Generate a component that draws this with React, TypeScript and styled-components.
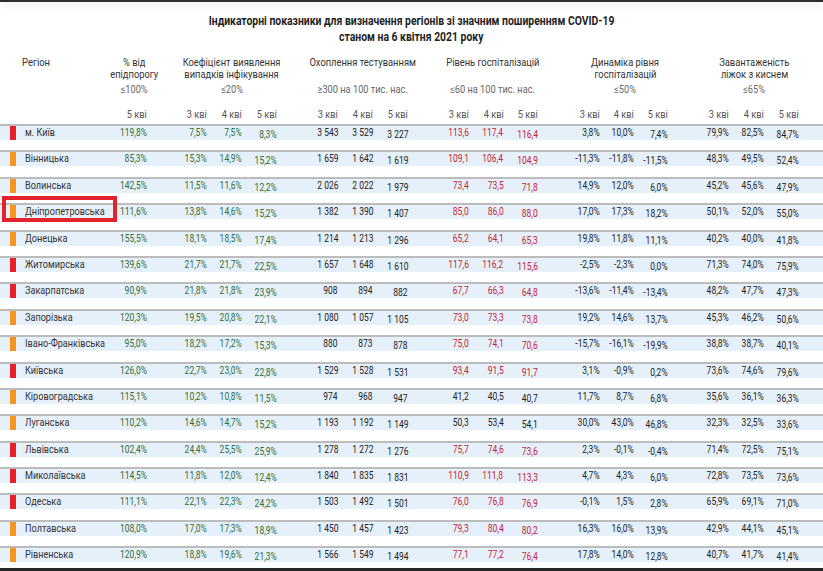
import React from 'react';
import styled, { createGlobalStyle } from 'styled-components';

type Level = 'red' | 'orange';
type Tone = 'green' | 'dark' | 'hosp';
type Origin = 'left' | 'center' | 'right';

interface RegionRow {
  name: string;
  level: Level;
  highlight?: boolean;
  values: string[][];
}

interface GroupDef {
  title: string[];
  limit: string;
  weeks: string[];
  gap: number;
  width: number;
  shift: number;
  tone: Tone;
}

const groups: GroupDef[] = [
  { title: ['% від', 'епідпорогу'], limit: '≤100%', weeks: ['5 кві'], gap: 0, width: 35, shift: 4.5, tone: 'green' },
  { title: ['Коефіцієнт виявлення', 'випадків інфікування'], limit: '≤20%', weeks: ['3 кві', '4 кві', '5 кві'], gap: 25, width: 105, shift: 7.5, tone: 'green' },
  { title: ['Охоплення тестуванням'], limit: '≥300 на 100 тис. нас.', weeks: ['3 кві', '4 кві', '5 кві'], gap: 26, width: 105, shift: 7.5, tone: 'dark' },
  { title: ['Рівень госпіталізацій'], limit: '≤60 на 100 тис. нас.', weeks: ['3 кві', '4 кві', '5 кві'], gap: 26, width: 104, shift: 7, tone: 'hosp' },
  { title: ['Динаміка рівня', 'госпіталізацій'], limit: '≤50%', weeks: ['3 кві', '4 кві', '5 кві'], gap: 27, width: 103, shift: 8.5, tone: 'dark' },
  { title: ['Завантаженість', 'ліжок з киснем'], limit: '≤65%', weeks: ['3 кві', '4 кві', '5 кві'], gap: 26, width: 105, shift: 8, tone: 'dark' },
];

const regions: RegionRow[] = [
  { name: 'м. Київ', level: 'red', values: [['119,8%'], ['7,5%', '7,5%', '8,3%'], ['3 543', '3 529', '3 227'], ['113,6', '117,4', '116,4'], ['3,8%', '10,0%', '7,4%'], ['79,9%', '82,5%', '84,7%']] },
  { name: 'Вінницька', level: 'orange', values: [['85,3%'], ['15,3%', '14,9%', '15,2%'], ['1 659', '1 642', '1 619'], ['109,1', '106,4', '104,9'], ['-11,3%', '-11,8%', '-11,5%'], ['48,3%', '49,5%', '52,4%']] },
  { name: 'Волинська', level: 'orange', values: [['142,5%'], ['11,5%', '11,6%', '12,2%'], ['2 026', '2 022', '1 979'], ['73,4', '73,5', '71,8'], ['14,9%', '12,0%', '6,0%'], ['45,2%', '45,6%', '47,9%']] },
  { name: 'Дніпропетровська', level: 'orange', highlight: true, values: [['111,6%'], ['13,8%', '14,6%', '15,2%'], ['1 382', '1 390', '1 407'], ['85,0', '86,0', '88,0'], ['17,0%', '17,3%', '18,2%'], ['50,1%', '52,0%', '55,0%']] },
  { name: 'Донецька', level: 'orange', values: [['155,5%'], ['18,1%', '18,5%', '17,4%'], ['1 214', '1 213', '1 296'], ['65,2', '64,1', '65,3'], ['19,8%', '11,8%', '11,1%'], ['40,2%', '40,0%', '41,8%']] },
  { name: 'Житомирська', level: 'red', values: [['139,6%'], ['21,7%', '21,7%', '22,5%'], ['1 657', '1 648', '1 610'], ['117,6', '116,2', '115,6'], ['-2,5%', '-2,3%', '0,0%'], ['71,3%', '74,0%', '75,9%']] },
  { name: 'Закарпатська', level: 'red', values: [['90,9%'], ['21,8%', '21,8%', '23,9%'], ['908', '894', '882'], ['67,7', '66,3', '64,8'], ['-13,6%', '-11,4%', '-13,4%'], ['48,2%', '47,7%', '47,3%']] },
  { name: 'Запорізька', level: 'orange', values: [['120,3%'], ['19,5%', '20,8%', '22,1%'], ['1 080', '1 057', '1 105'], ['73,0', '73,3', '73,8'], ['19,2%', '14,6%', '13,7%'], ['45,3%', '46,2%', '50,6%']] },
  { name: 'Івано-Франківська', level: 'orange', values: [['95,0%'], ['18,2%', '17,2%', '15,3%'], ['880', '873', '878'], ['75,0', '74,1', '70,6'], ['-15,7%', '-16,1%', '-19,9%'], ['38,8%', '38,7%', '40,1%']] },
  { name: 'Київська', level: 'red', values: [['126,0%'], ['22,7%', '23,0%', '22,8%'], ['1 529', '1 528', '1 531'], ['93,4', '91,5', '91,7'], ['3,1%', '-0,9%', '0,2%'], ['73,6%', '74,6%', '79,6%']] },
  { name: 'Кіровоградська', level: 'orange', values: [['115,1%'], ['10,2%', '10,8%', '11,5%'], ['974', '968', '947'], ['41,2', '40,5', '40,7'], ['11,7%', '8,7%', '6,8%'], ['35,6%', '36,1%', '36,3%']] },
  { name: 'Луганська', level: 'orange', values: [['110,2%'], ['14,6%', '14,7%', '15,2%'], ['1 193', '1 192', '1 149'], ['50,3', '53,4', '54,1'], ['30,0%', '43,0%', '46,8%'], ['32,3%', '32,5%', '33,6%']] },
  { name: 'Львівська', level: 'red', values: [['102,4%'], ['24,4%', '25,5%', '25,9%'], ['1 278', '1 272', '1 276'], ['75,7', '74,6', '73,6'], ['2,3%', '-0,1%', '-0,4%'], ['71,4%', '72,5%', '75,1%']] },
  { name: 'Миколаївська', level: 'red', values: [['114,5%'], ['11,8%', '12,0%', '12,4%'], ['1 840', '1 835', '1 831'], ['110,9', '111,8', '113,3'], ['4,7%', '4,3%', '6,0%'], ['72,8%', '73,5%', '73,6%']] },
  { name: 'Одеська', level: 'red', values: [['111,1%'], ['22,1%', '22,3%', '24,2%'], ['1 503', '1 492', '1 501'], ['76,0', '76,8', '76,9'], ['-0,1%', '1,5%', '2,8%'], ['65,9%', '69,1%', '71,0%']] },
  { name: 'Полтавська', level: 'orange', values: [['108,0%'], ['17,0%', '17,3%', '18,9%'], ['1 450', '1 457', '1 423'], ['79,3', '80,4', '80,2'], ['16,3%', '16,0%', '13,9%'], ['42,9%', '44,1%', '45,1%']] },
  { name: 'Рівненська', level: 'orange', values: [['120,9%'], ['18,8%', '19,6%', '21,3%'], ['1 566', '1 549', '1 494'], ['77,1', '77,2', '76,4'], ['17,8%', '14,0%', '12,8%'], ['40,7%', '41,7%', '41,4%']] },
];

const levelColor: Record<Level, string> = { red: '#e8202a', orange: '#f7941d' };

const GlobalStyle = createGlobalStyle`
  html, body {
    margin: 0;
    padding: 0;
    background: #fff;
  }
  body {
    font-family: "Roboto", "Liberation Sans", sans-serif;
    overflow: hidden;
  }
`;

// no condensed face is installed, so the narrow look is made by squeezing the glyphs
const Squeeze = styled.span<{ $scale: number; $origin: Origin }>`
  display: inline-block;
  white-space: nowrap;
  transform: scaleX(${({ $scale }) => $scale});
  transform-origin: ${({ $origin }) => $origin} center;
`;

const Page = styled.div`
  width: 823px;
  height: 571px;
  display: flex;
  flex-direction: column;
  overflow: hidden;
  background: #fff;
`;

const TopBar = styled.div`
  height: 2px;
  flex-shrink: 0;
  background: #2d2d2d;
  box-shadow: 0 2px 8px rgba(0, 0, 0, 0.2);
  position: relative;
  z-index: 2;
`;

const BottomBar = styled.div`
  height: 3px;
  flex-shrink: 0;
  background: #262626;
`;

const Sheet = styled.div`
  flex: 1;
  overflow: hidden;
  color: #222;
`;

const Title = styled.h1`
  margin: 11px 0 0;
  display: flex;
  flex-direction: column;
  align-items: center;
  font-size: 13px;
  line-height: 16px;
  font-weight: 700;
  color: #1f1f1f;
`;

const HeadRow = styled.div`
  display: flex;
  margin-top: 12px;
  font-size: 11px;
  line-height: 12px;
`;

const RegionHead = styled.div`
  width: 90px;
  padding-left: 22px;
  flex-shrink: 0;
  color: #333;
`;

const GroupBox = styled.div<{ $gap: number; $width: number }>`
  margin-left: ${({ $gap }) => $gap}px;
  width: ${({ $width }) => $width}px;
  flex-shrink: 0;
  display: flex;
  flex-direction: column;
`;

const GroupTitle = styled.div<{ $shift: number }>`
  height: 24px;
  padding-left: ${({ $shift }) => $shift * 2}px;
  display: flex;
  flex-direction: column;
  align-items: center;
  color: #333;
`;

const Limit = styled.div<{ $shift: number }>`
  margin-top: 3px;
  padding-left: ${({ $shift }) => $shift * 2}px;
  display: flex;
  justify-content: center;
  color: #666;
`;

const Weeks = styled.div`
  display: flex;
  margin-top: 13px;
  color: #555;
`;

const Cell = styled.div<{ $color?: string; $drop?: boolean }>`
  flex: 1;
  text-align: right;
  white-space: nowrap;
  color: ${({ $color }) => $color || 'inherit'};
  padding-top: ${({ $drop }) => ($drop ? 2 : 0)}px;
`;

const Body = styled.div`
  margin-top: 3px;
`;

const Row = styled.div`
  position: relative;
  display: flex;
  height: 14px;
  border-top: 2px solid #bcbcbc;
  background: #e6f0fa;
  margin-bottom: 10.4px;
  font-size: 11px;
  line-height: 14px;
  color: #222;
`;

const Marker = styled.div<{ $level: Level }>`
  width: 6px;
  margin-left: 10px;
  flex-shrink: 0;
  background: ${({ $level }) => levelColor[$level]};
`;

const RegionName = styled.div`
  width: 87px;
  margin-left: 9px;
  flex-shrink: 0;
  color: #333;
`;

const Values = styled.div<{ $gap: number; $width: number }>`
  margin-left: ${({ $gap }) => $gap}px;
  width: ${({ $width }) => $width}px;
  flex-shrink: 0;
  display: flex;
`;

const HighlightFrame = styled.div`
  position: absolute;
  left: 2px;
  top: -9px;
  width: 115px;
  height: 26px;
  box-sizing: border-box;
  border: 4px solid #e3232b;
  pointer-events: none;
`;

const toneColor = (tone: Tone, value: string) => {
  if (tone === 'green') return '#2f6d3b';
  if (tone === 'hosp') {
    return parseFloat(value.replace(',', '.')) > 60 ? '#c52634' : '#222';
  }
  return '#222';
};

export default function App() {
  return (
    <Page>
      <GlobalStyle />
      <TopBar />
      <Sheet>
        <Title>
          <Squeeze $scale={0.8} $origin="center">
            Індикаторні показники для визначення регіонів зі значним поширенням COVID-19
          </Squeeze>
          <Squeeze $scale={0.8} $origin="center">
            станом на 6 квітня 2021 року
          </Squeeze>
        </Title>

        <HeadRow>
          <RegionHead>
            <Squeeze $scale={0.86} $origin="left">Регіон</Squeeze>
          </RegionHead>
          {groups.map((g) => (
            <GroupBox key={g.title[0]} $gap={g.gap} $width={g.width}>
              <GroupTitle $shift={g.shift}>
                {g.title.map((line) => (
                  <Squeeze key={line} $scale={0.85} $origin="center">
                    {line}
                  </Squeeze>
                ))}
              </GroupTitle>
              <Limit $shift={g.shift}>
                <Squeeze $scale={0.84} $origin="center">{g.limit}</Squeeze>
              </Limit>
              <Weeks>
                {g.weeks.map((w) => (
                  <Cell key={w}>
                    <Squeeze $scale={0.84} $origin="right">{w}</Squeeze>
                  </Cell>
                ))}
              </Weeks>
            </GroupBox>
          ))}
        </HeadRow>

        <Body>
          {regions.map((r) => (
            <Row key={r.name}>
              <Marker $level={r.level} />
              <RegionName>
                <Squeeze $scale={0.83} $origin="left">{r.name}</Squeeze>
              </RegionName>
              {groups.map((g, gi) => (
                <Values key={g.title[0]} $gap={g.gap} $width={g.width}>
                  {r.values[gi].map((v, vi) => (
                    <Cell key={vi} $color={toneColor(g.tone, v)} $drop={vi === 2}>
                      <Squeeze $scale={0.77} $origin="right">{v}</Squeeze>
                    </Cell>
                  ))}
                </Values>
              ))}
              {r.highlight && <HighlightFrame />}
            </Row>
          ))}
        </Body>
      </Sheet>
      <BottomBar />
    </Page>
  );
}
